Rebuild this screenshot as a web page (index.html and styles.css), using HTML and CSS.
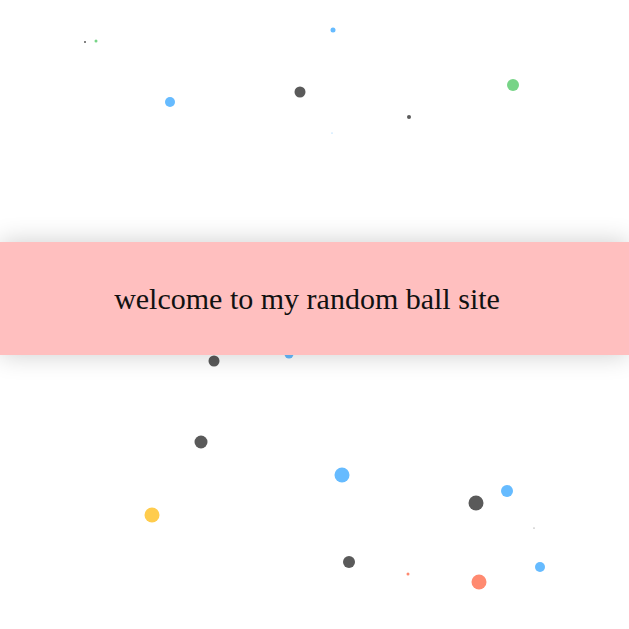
FILE: index.html
```html
<!DOCTYPE html>
<html>
<head>
<meta charset="utf-8">
<link rel="stylesheet" href="styles.css">
</head>
<body>
<div class="balls">
  <span class="ball gray" style="left:85px;top:42px;width:2px;height:2px"></span>
  <span class="ball green" style="left:96px;top:41px;width:3px;height:3px"></span>
  <span class="ball blue" style="left:333px;top:30px;width:5px;height:5px"></span>
  <span class="ball blue" style="left:170px;top:102px;width:10px;height:10px"></span>
  <span class="ball gray" style="left:300px;top:92px;width:11px;height:11px"></span>
  <span class="ball green" style="left:513px;top:85px;width:12px;height:12px"></span>
  <span class="ball gray" style="left:409px;top:117px;width:4px;height:4px"></span>
  <span class="ball blue" style="left:332px;top:133px;width:1px;height:1px"></span>
  <span class="ball gray" style="left:214px;top:361px;width:11px;height:11px"></span>
  <span class="ball blue" style="left:289px;top:354px;width:9px;height:9px"></span>
  <span class="ball gray" style="left:201px;top:442px;width:13px;height:13px"></span>
  <span class="ball blue" style="left:342px;top:475px;width:15px;height:15px"></span>
  <span class="ball yellow" style="left:152px;top:515px;width:15px;height:15px"></span>
  <span class="ball gray" style="left:349px;top:562px;width:12px;height:12px"></span>
  <span class="ball gray" style="left:476px;top:503px;width:15px;height:15px"></span>
  <span class="ball blue" style="left:507px;top:491px;width:12px;height:12px"></span>
  <span class="ball gray" style="left:534px;top:528px;width:1px;height:1px"></span>
  <span class="ball blue" style="left:540px;top:567px;width:10px;height:10px"></span>
  <span class="ball orange" style="left:408px;top:574px;width:3px;height:3px"></span>
  <span class="ball orange" style="left:479px;top:582px;width:15px;height:15px"></span>
</div>
<main class="page">
  <div class="banner">
    <h1 class="title">welcome to my random ball site</h1>
  </div>
</main>
</body>
</html>
```
FILE: styles.css
```css
html, body {
  margin: 0;
  padding: 0;
  background: #ffffff;
  overflow: hidden;
}
body {
  width: 629px;
  height: 629px;
  position: relative;
  font-family: "Liberation Serif", "Times New Roman", serif;
}
.balls {
  position: absolute;
  inset: 0;
}
.ball {
  position: absolute;
  border-radius: 50%;
  transform: translate(-50%, -50%);
}
.gray { background: #5a5a5a; }
.blue { background: #66bbff; }
.green { background: #77d487; }
.yellow { background: #ffcc4d; }
.orange { background: #ff8a70; }

.page {
  position: relative;
  z-index: 1;
  padding-top: 242px;
}
.banner {
  height: 113px;
  background: #ffbfbf;
  box-shadow: 0 0 24px rgba(0, 0, 0, 0.2);
  display: flex;
  align-items: center;
  justify-content: center;
  padding-right: 15px;
}
.title {
  margin: 0;
  font-weight: normal;
  font-size: 30px;
  color: #111;
}
```
